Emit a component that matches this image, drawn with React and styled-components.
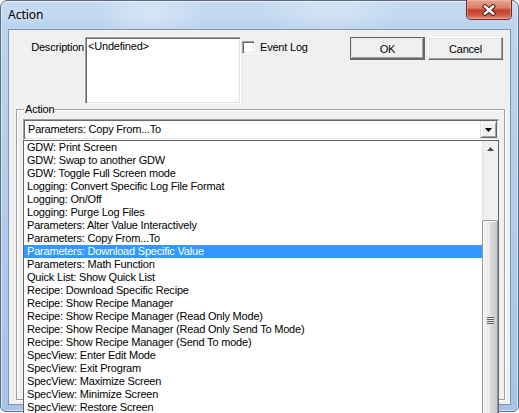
import React from "react";
import styled, { createGlobalStyle } from "styled-components";

const GlobalStyle = createGlobalStyle`
  html, body {
    margin: 0;
    padding: 0;
    background: #ffffff;
    overflow: hidden;
  }
  body {
    width: 519px;
    height: 413px;
    font-family: "Liberation Sans", Arial, sans-serif;
    font-size: 11px;
    letter-spacing: -0.2px;
    color: #000;
  }
`;

const Window = styled.div`
  position: relative;
  width: 519px;
  height: 412px;
  box-sizing: border-box;
  border: 1px solid #5b6c82;
  border-radius: 7px 7px 6px 6px;
  background: linear-gradient(to bottom, #c6dcf3 0px, #bad3ee 28px, #b3cdea 200px, #a4c3e7 100%);
  box-shadow: inset 0 0 0 1px rgba(255, 255, 255, 0.55);
  display: flex;
  flex-direction: column;
`;

const TitleBar = styled.div`
  height: 28px;
  display: flex;
  align-items: flex-start;
  padding-left: 7px;
  background:
    radial-gradient(ellipse 60px 30px at 150px 14px, rgba(255,255,255,0.35), rgba(255,255,255,0)),
    radial-gradient(ellipse 80px 30px at 330px 10px, rgba(255,255,255,0.3), rgba(255,255,255,0));
  border-radius: 6px 6px 0 0;
`;

const Title = styled.span`
  font-family: "Noto Sans", "Open Sans", sans-serif;
  font-size: 12px;
  letter-spacing: 0;
  line-height: 28px;
  color: #000;
  text-shadow: 0 0 6px rgba(255, 255, 255, 0.9);
`;

const CloseButton = styled.div`
  margin-left: auto;
  margin-right: 6px;
  margin-top: -1px;
  width: 46px;
  height: 20px;
  box-sizing: border-box;
  border: 1px solid #6e2a20;
  border-top: none;
  border-radius: 0 0 5px 5px;
  background: linear-gradient(to bottom, #e6a493 0%, #d88169 40%, #c3412e 55%, #cc5a40 80%, #e0907a 100%);
  box-shadow: inset 0 0 0 1px rgba(255, 200, 190, 0.45);
  display: flex;
  align-items: center;
  justify-content: center;
`;

const Client = styled.div`
  flex: 1;
  margin: 0 7px 6px 7px;
  border: 1px solid #8495aa;
  background: #f0f0f0;
  display: flex;
  flex-direction: column;
`;

const TopRow = styled.div`
  display: flex;
  align-items: flex-start;
  padding: 7px 7px 0 0;
`;

const FieldLabel = styled.div`
  width: 76px;
  box-sizing: border-box;
  padding-right: 1px;
  text-align: right;
  line-height: 13px;
  margin-top: 4px;
`;

const TextBox = styled.div`
  width: 156px;
  height: 67px;
  box-sizing: border-box;
  background: #fff;
  border: 1px solid;
  border-color: #a0a0a0 #ffffff #ffffff #a0a0a0;
  box-shadow: inset 1px 1px 0 #696969, inset -1px -1px 0 #e3e3e3;
  padding: 2px 2px;
  line-height: 13px;
`;

const CheckRow = styled.label`
  display: flex;
  align-items: center;
  margin-left: 1px;
  margin-top: 4px;
  height: 13px;
`;

const CheckBox = styled.span`
  width: 13px;
  height: 13px;
  box-sizing: border-box;
  background: #fff;
  border: 1px solid;
  border-color: #a0a0a0 #ffffff #ffffff #a0a0a0;
  box-shadow: inset 1px 1px 0 #696969, inset -1px -1px 0 #e3e3e3;
`;

const CheckText = styled.span`
  margin-left: 5px;
  line-height: 13px;
`;

const Buttons = styled.div`
  margin-left: auto;
  display: flex;
  gap: 3px;
`;

const Button = styled.div`
  width: 75px;
  height: 23px;
  box-sizing: border-box;
  background: #f0f0f0;
  display: flex;
  align-items: center;
  justify-content: center;
  border: 1px solid;
  border-color: ${(p) => (p.$default ? "#696969" : "#ffffff #696969 #696969 #ffffff")};
  box-shadow: ${(p) =>
    p.$default
      ? "inset -1px -1px 0 #696969, inset 1px 1px 0 #e3e3e3, inset -2px -2px 0 #a0a0a0"
      : "inset -1px -1px 0 #a0a0a0, inset 1px 1px 0 #e3e3e3"};
`;

const Group = styled.div`
  position: relative;
  flex: 1;
  margin: 5px 5px 4px 7px;
  border: 1px solid #a0a0a0;
  box-shadow: inset 1px 1px 0 #ffffff, 1px 1px 0 #ffffff;
  padding: 9px 5px 0 6px;
`;

const GroupLabel = styled.span`
  position: absolute;
  top: -7px;
  left: 7px;
  padding: 0 1px;
  background: #f0f0f0;
  line-height: 13px;
`;

const Combo = styled.div`
  position: relative;
  height: 21px;
  box-sizing: border-box;
  background: #fff;
  border: 1px solid;
  border-color: #a0a0a0 #ffffff #ffffff #a0a0a0;
  box-shadow: inset 1px 1px 0 #696969, inset -1px -1px 0 #e3e3e3;
  display: flex;
  align-items: center;
  padding: 1px 1px 1px 4px;
`;

const ComboText = styled.span`
  flex: 1;
  line-height: 13px;
`;

const DropButton = styled.div`
  width: 17px;
  height: 17px;
  box-sizing: border-box;
  background: #f0f0f0;
  border: 1px solid;
  border-color: #e3e3e3 #696969 #696969 #e3e3e3;
  box-shadow: inset 1px 1px 0 #ffffff, inset -1px -1px 0 #a0a0a0;
  display: flex;
  align-items: center;
  justify-content: center;
`;

const DropList = styled.div`
  position: absolute;
  top: 20px;
  left: -1px;
  width: 476px;
  height: 290px;
  box-sizing: border-box;
  border: 1px solid #646464;
  background: #fff;
  display: flex;
  z-index: 10;
`;

const Items = styled.div`
  width: 458px;
  display: flex;
  flex-direction: column;
`;

const Item = styled.div`
  height: 13px;
  line-height: 13px;
  padding-left: 3px;
  white-space: nowrap;
  background: ${(p) => (p.$selected ? "#3399ff" : "transparent")};
  color: ${(p) => (p.$selected ? "#ffffff" : "#000000")};
`;

const ScrollBar = styled.div`
  width: 16px;
  display: flex;
  flex-direction: column;
  background: linear-gradient(to right, #e2e2e2 0px, #efefef 3px, #f2f2f2 100%);
`;

const ArrowButton = styled.div`
  height: 17px;
  display: flex;
  align-items: center;
  justify-content: center;
`;

const Thumb = styled.div`
  margin-top: 64px;
  height: 220px;
  box-sizing: border-box;
  border: 1px solid #979797;
  border-radius: 2px;
  background: linear-gradient(to right, #f4f4f4 0%, #ebebeb 45%, #dadada 55%, #c9c9c9 100%);
  box-shadow: inset 1px 1px 0 rgba(255, 255, 255, 0.8);
  display: flex;
  justify-content: center;
  padding-top: 96px;
`;

const Grip = styled.div`
  width: 7px;
  height: 7px;
  background: repeating-linear-gradient(to bottom, #5f5f5f 0px, #5f5f5f 1px, #e8e8e8 1px, #e8e8e8 2px);
`;

const items = [
  "GDW: Print Screen",
  "GDW: Swap to another GDW",
  "GDW: Toggle Full Screen mode",
  "Logging: Convert Specific Log File Format",
  "Logging: On/Off",
  "Logging: Purge Log Files",
  "Parameters: Alter Value Interactively",
  "Parameters: Copy From...To",
  "Parameters: Download Specific Value",
  "Parameters: Math Function",
  "Quick List: Show Quick List",
  "Recipe: Download Specific Recipe",
  "Recipe: Show Recipe Manager",
  "Recipe: Show Recipe Manager (Read Only Mode)",
  "Recipe: Show Recipe Manager (Read Only Send To Mode)",
  "Recipe: Show Recipe Manager (Send To mode)",
  "SpecView: Enter Edit Mode",
  "SpecView: Exit Program",
  "SpecView: Maximize Screen",
  "SpecView: Minimize Screen",
  "SpecView: Restore Screen",
];

const SELECTED = 8;

export default function App() {
  return (
    <>
      <GlobalStyle />
      <Window>
        <TitleBar>
          <Title>Action</Title>
          <CloseButton>
            <svg width="14" height="12" viewBox="0 0 14 12">
              <path d="M3 2.5 L11 9.5 M11 2.5 L3 9.5" stroke="#4a1710" strokeWidth="4.4" strokeLinecap="square" />
              <path d="M3 2.5 L11 9.5 M11 2.5 L3 9.5" stroke="#ffffff" strokeWidth="2.6" strokeLinecap="square" />
            </svg>
          </CloseButton>
        </TitleBar>
        <Client>
          <TopRow>
            <FieldLabel>Description</FieldLabel>
            <TextBox>&lt;Undefined&gt;</TextBox>
            <CheckRow>
              <CheckBox />
              <CheckText>Event Log</CheckText>
            </CheckRow>
            <Buttons>
              <Button $default>OK</Button>
              <Button>Cancel</Button>
            </Buttons>
          </TopRow>
          <Group>
            <GroupLabel>Action</GroupLabel>
            <Combo>
              <ComboText>Parameters: Copy From...To</ComboText>
              <DropButton>
                <svg width="7" height="4" viewBox="0 0 7 4">
                  <path d="M0 0 H7 L3.5 4 Z" fill="#000" />
                </svg>
              </DropButton>
              <DropList>
                <Items>
                  {items.map((text, i) => (
                    <Item key={text} $selected={i === SELECTED}>
                      {text}
                    </Item>
                  ))}
                </Items>
                <ScrollBar>
                  <ArrowButton>
                    <svg width="7" height="4" viewBox="0 0 7 4">
                      <path d="M0 4 H7 L3.5 0 Z" fill="#4d4d4d" />
                    </svg>
                  </ArrowButton>
                  <Thumb>
                    <Grip />
                  </Thumb>
                </ScrollBar>
              </DropList>
            </Combo>
          </Group>
        </Client>
      </Window>
    </>
  );
}
